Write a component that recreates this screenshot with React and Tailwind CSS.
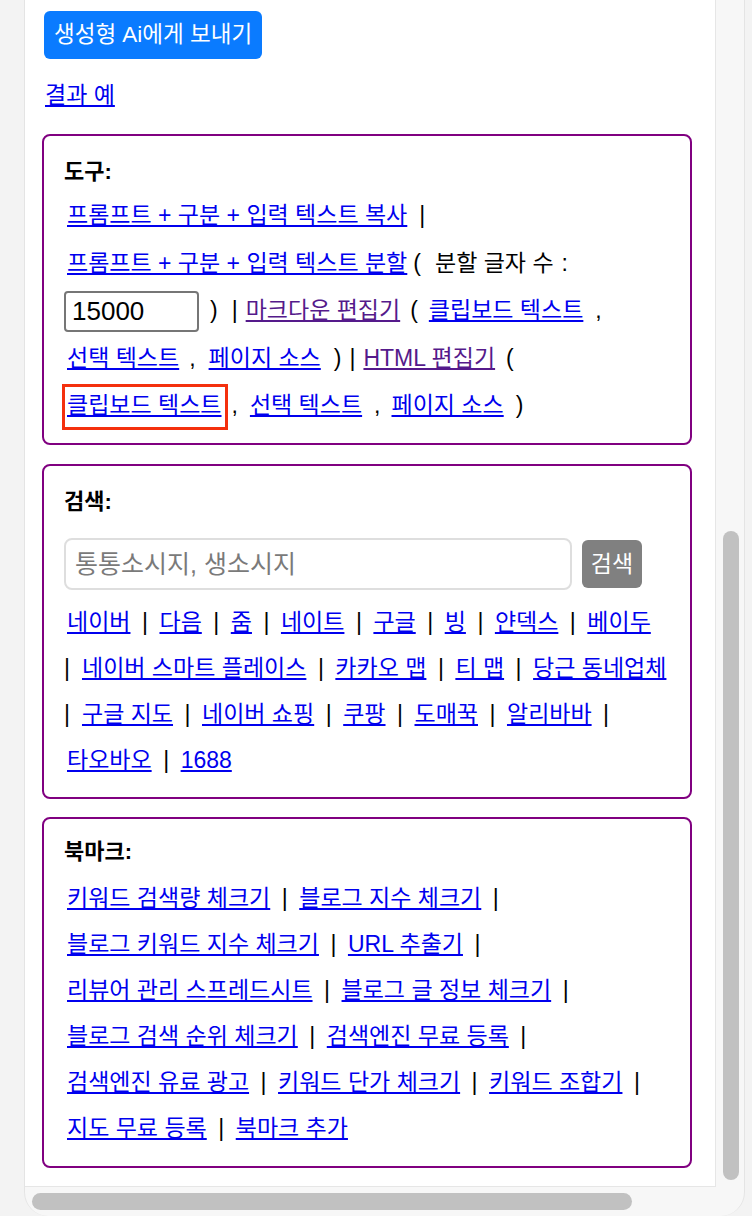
import React from "react";

function L({ children, v, className = "" }) {
  return (
    <a
      href="#"
      className={
        (v ? "underline text-[#551a8b] " : "underline text-[#0000ee] ") +
        className
      }
    >
      {children}
    </a>
  );
}

function Sep() {
  return <span className="mx-[11.5px] text-black">|</span>;
}

function LeadSep() {
  return <span className="-ml-[3px] mr-[12px] text-black">|</span>;
}

function Line({ children, tall }) {
  return (
    <div
      className={
        tall
          ? "h-[47.5px] leading-[47.5px] whitespace-nowrap"
          : "h-[46px] leading-[46px] whitespace-nowrap"
      }
    >
      {children}
    </div>
  );
}

function Box({ children, className = "" }) {
  return (
    <div
      className={
        "w-[650px] border-2 border-[#800080] rounded-[8px] pl-[23px] pr-[10px] " +
        className
      }
    >
      {children}
    </div>
  );
}

function Heading({ children, className = "" }) {
  return (
    <div className={"h-[24px] leading-[24px] font-bold text-[22px] -ml-[3px] " + className}>
      {children}
    </div>
  );
}

function Tools() {
  return (
    <Box className="mt-[27px] pt-[24px] pb-[13.5px]">
      <Heading className="mb-[8px]">도구:</Heading>
      <Line tall>
        <L>프롬프트 + 구분 + 입력 텍스트 복사</L>
        <span className="ml-[12px]">|</span>
      </Line>
      <Line tall>
        <L>프롬프트 + 구분 + 입력 텍스트 분할</L>
        <span className="ml-[6px]">(</span>
        <span className="ml-[14px]">분할 글자 수</span>
        <span className="ml-[8px]">:</span>
      </Line>
      <Line tall>
        <input
          type="text"
          defaultValue="15000"
          className="-ml-[3px] w-[135px] h-[41px] align-middle border-2 border-[#767676] rounded-[4px] px-[6px] text-[26px] text-black bg-white outline-none"
        />
        <span className="ml-[11px]">)</span>
        <span className="ml-[14px]">|</span>
        <L v className="ml-[8px]">마크다운 편집기</L>
        <span className="ml-[10px]">(</span>
        <L className="ml-[11px]">클립보드 텍스트</L>
        <span className="ml-[12px]">,</span>
      </Line>
      <Line tall>
        <L>선택 텍스트</L>
        <span className="ml-[10px]">,</span>
        <L className="ml-[13px]">페이지 소스</L>
        <span className="ml-[13px]">)</span>
        <span className="ml-[8px]">|</span>
        <L v className="ml-[8px]">HTML 편집기</L>
        <span className="ml-[11px]">(</span>
      </Line>
      <Line tall>
        <span className="relative">
          <L>클립보드 텍스트</L>
          <span className="absolute -left-[5px] -right-[6px] -top-[8px] -bottom-[12px] border-[3px] border-[#f4300d] pointer-events-none"></span>
        </span>
        <span className="ml-[10px]">,</span>
        <L className="ml-[12px]">선택 텍스트</L>
        <span className="ml-[12px]">,</span>
        <L className="ml-[11px]">페이지 소스</L>
        <span className="ml-[12px]">)</span>
      </Line>
    </Box>
  );
}

function Search() {
  return (
    <Box className="mt-[19px] pt-[24px] pb-[14px]">
      <Heading>검색:</Heading>
      <div className="mt-[24px] flex items-center gap-[10px] -ml-[3px]">
        <input
          type="text"
          placeholder="통통소시지, 생소시지"
          className="w-[508px] h-[52px] border-2 border-[#dedede] rounded-[8px] pl-[9px] text-[25px] placeholder:text-[#7a7a7a] outline-none"
        />
        <button className="w-[60px] h-[48px] rounded-[6px] bg-[#808080] text-white text-[23px]">
          검색
        </button>
      </div>
      <div className="mt-[9px]">
        <Line>
          <L>네이버</L>
          <Sep />
          <L>다음</L>
          <Sep />
          <L>줌</L>
          <Sep />
          <L>네이트</L>
          <Sep />
          <L>구글</L>
          <Sep />
          <L>빙</L>
          <Sep />
          <L>얀덱스</L>
          <Sep />
          <L>베이두</L>
        </Line>
        <Line>
          <LeadSep />
          <L>네이버 스마트 플레이스</L>
          <Sep />
          <L>카카오 맵</L>
          <Sep />
          <L>티 맵</L>
          <Sep />
          <L>당근 동네업체</L>
        </Line>
        <Line>
          <LeadSep />
          <L>구글 지도</L>
          <Sep />
          <L>네이버 쇼핑</L>
          <Sep />
          <L>쿠팡</L>
          <Sep />
          <L>도매꾹</L>
          <Sep />
          <L>알리바바</L>
          <Sep />
        </Line>
        <Line>
          <L>타오바오</L>
          <Sep />
          <L>1688</L>
        </Line>
      </div>
    </Box>
  );
}

function Bookmarks() {
  return (
    <Box className="mt-[18px] pt-[21px] pb-[15px]">
      <Heading className="mb-[11px]">북마크:</Heading>
      <Line>
        <L>키워드 검색량 체크기</L>
        <Sep />
        <L>블로그 지수 체크기</L>
        <Sep />
      </Line>
      <Line>
        <L>블로그 키워드 지수 체크기</L>
        <Sep />
        <L>URL 추출기</L>
        <Sep />
      </Line>
      <Line>
        <L>리뷰어 관리 스프레드시트</L>
        <Sep />
        <L>블로그 글 정보 체크기</L>
        <Sep />
      </Line>
      <Line>
        <L>블로그 검색 순위 체크기</L>
        <Sep />
        <L>검색엔진 무료 등록</L>
        <Sep />
      </Line>
      <Line>
        <L>검색엔진 유료 광고</L>
        <Sep />
        <L>키워드 단가 체크기</L>
        <Sep />
        <L>키워드 조합기</L>
        <Sep />
      </Line>
      <Line>
        <L>지도 무료 등록</L>
        <Sep />
        <L>북마크 추가</L>
      </Line>
    </Box>
  );
}

export default function App() {
  return (
    <div className="w-[752px] h-[1216px] overflow-hidden bg-[#f3f3f3] pl-[24px] pr-[7px] font-['Liberation_Sans','Noto_Sans_CJK_KR',sans-serif] text-[23px] text-black">
      <div className="h-full flex flex-col bg-[#f7f7f7] border-l border-r border-[#e4e4e4] rounded-b-[24px] overflow-hidden">
        <div className="flex flex-1 min-h-0">
          {/* page */}
          <div className="flex-1 bg-white border-r border-b border-[#e6e6e6] px-[17px] pt-[11px] overflow-hidden">
            <button className="ml-[2px] h-[48px] px-[10px] rounded-[6px] bg-[#0a7bff] text-white text-[22.5px]">
              생성형 Ai에게 보내기
            </button>
            <div className="mt-[24px] ml-[3px] h-[24px] leading-[24px]">
              <L>결과 예</L>
            </div>
            <Tools />
            <Search />
            <Bookmarks />
          </div>
          {/* vertical scrollbar */}
          <div className="w-[28px] pl-[7px] pt-[531px]">
            <div className="w-[16px] h-[649px] rounded-full bg-[#c1c1c1]"></div>
          </div>
        </div>
        {/* horizontal scrollbar */}
        <div className="h-[29px] pl-[7px] pt-[6px]">
          <div className="w-[600px] h-[17px] rounded-full bg-[#c1c1c1]"></div>
        </div>
      </div>
    </div>
  );
}
